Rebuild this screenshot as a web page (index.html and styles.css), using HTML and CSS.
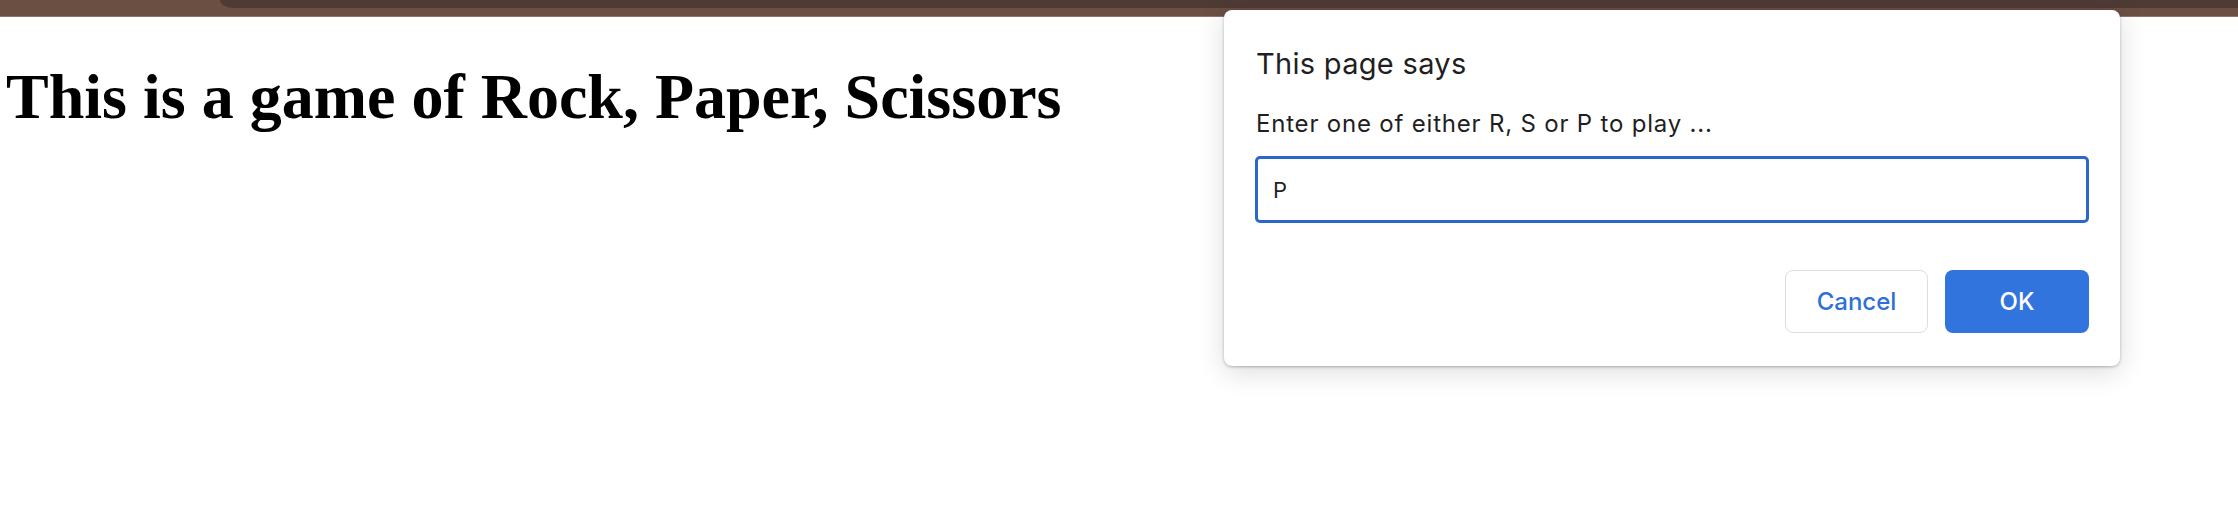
FILE: index.html
```html
<!DOCTYPE html>
<html lang="en">
<head>
<meta charset="utf-8">
<title>Rock, Paper, Scissors</title>
<link rel="stylesheet" href="styles.css">
</head>
<body>
<div class="chrome-bar">
  <div class="chrome-tab"></div>
</div>
<h1 class="title">This is a game of Rock, Paper, Scissors</h1>

<div class="dialog" role="dialog" aria-labelledby="dlg-title">
  <div class="dialog-title" id="dlg-title">This page says</div>
  <div class="dialog-message">Enter one of either R, S or P to play ...</div>
  <input class="dialog-input" type="text" value="P">
  <div class="dialog-actions">
    <button class="btn btn-cancel" type="button">Cancel</button>
    <button class="btn btn-ok" type="button">OK</button>
  </div>
</div>
</body>
</html>
```

FILE: styles.css
```css
html, body {
  margin: 0;
  padding: 0;
  background: #ffffff;
}

body {
  position: relative;
  width: 2238px;
  height: 506px;
  overflow: hidden;
}

.chrome-bar {
  height: 16px;
  background: #6c4f43;
  border-bottom: 1px solid #8d766d;
  display: flex;
  align-items: flex-start;
  padding-left: 220px;
}

.chrome-tab {
  flex: 1;
  height: 8px;
  background: #4f3b35;
  border-bottom-left-radius: 14px 8px;
}

.title {
  margin: 43px 0 0 0;
  padding-left: 6px;
  font-family: "Liberation Serif", "Times New Roman", serif;
  font-weight: bold;
  font-size: 64px;
  line-height: normal;
  color: #000000;
}

.dialog {
  position: absolute;
  left: 1224px;
  top: 10px;
  width: 896px;
  height: 356px;
  box-sizing: border-box;
  padding: 36px 31px 33px 31px;
  background: #ffffff;
  border-radius: 8px;
  box-shadow: 0 1px 3px rgba(0, 0, 0, 0.28), 0 6px 28px rgba(0, 0, 0, 0.14);
  font-family: Inter, "Noto Sans", sans-serif;
  color: #1f1f1f;
  display: flex;
  flex-direction: column;
}

.dialog-title {
  font-size: 29px;
  line-height: 36px;
  letter-spacing: 0.3px;
  padding-left: 1px;
}

.dialog-message {
  margin-top: 27px;
  font-size: 24px;
  line-height: 30px;
  letter-spacing: 0.8px;
  padding-left: 1px;
}

.dialog-input {
  margin-top: 17px;
  height: 67px;
  width: 100%;
  box-sizing: border-box;
  border: 3px solid #2c68c9;
  border-radius: 5px;
  outline: none;
  padding: 0 15px;
  font-family: Inter, "Noto Sans", sans-serif;
  font-size: 22px;
  color: #1f1f1f;
  background: #ffffff;
}

.dialog-actions {
  margin-top: auto;
  display: flex;
  justify-content: flex-end;
  gap: 17px;
}

.btn {
  height: 63px;
  width: 143px;
  border-radius: 8px;
  font-family: Inter, "Noto Sans", sans-serif;
  font-size: 24px;
  font-weight: 500;
  cursor: pointer;
  padding: 0;
}

.btn-cancel {
  background: #ffffff;
  color: #2f6fd8;
  border: 1px solid #dcdde0;
}

.btn-ok {
  width: 144px;
  background: #3174dd;
  color: #ffffff;
  border: none;
}
```
